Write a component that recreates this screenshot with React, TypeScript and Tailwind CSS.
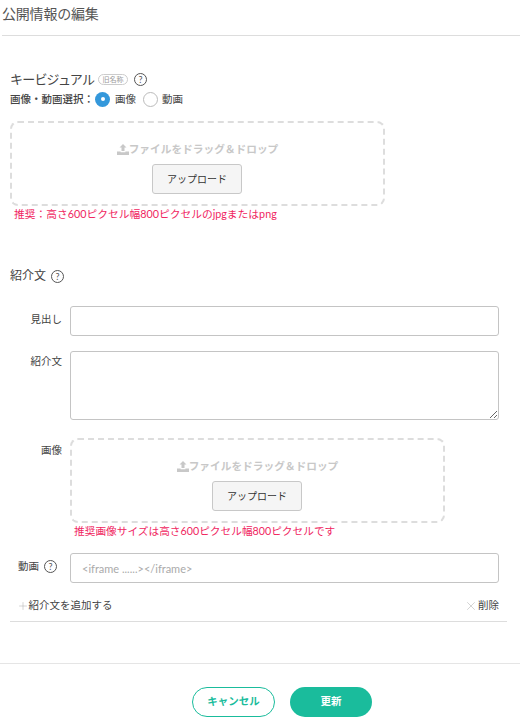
import { Plus, X } from "lucide-react";

const FONT = "font-['Lato','Noto_Sans_CJK_JP',sans-serif]";

function Help() {
  return (
    <span className="inline-flex h-[13px] w-[13px] items-center justify-center rounded-full border border-[#555] text-[9px] leading-none text-[#555]">
      ?
    </span>
  );
}

function UploadIcon() {
  return (
    <svg width="12" height="11" viewBox="0 0 12 11" fill="#c8c8c8">
      <path d="M6 0 9.5 3.6H7.5V7H4.5V3.6H2.5Z" />
      <path d="M0 7.5H3.6V8.2H8.4V7.5H12V11H0Z" />
    </svg>
  );
}

function DropZone() {
  return (
    <div className="flex h-[85px] w-[375px] flex-col items-center rounded-lg border-2 border-dashed border-[#dddddd] pt-[18px]">
      <div className="flex h-4 items-center text-[10.7px] font-bold leading-4 text-[#c8c8c8]">
        <UploadIcon />
        <span>{"ファイルをドラッグ\uFF06ドロップ"}</span>
      </div>
      <button className="mr-[1px] mt-[7px] h-[30px] w-[90px] rounded-[3px] border border-[#c8c8c8] bg-[#f5f5f5] text-[10px] text-[#333]">
        アップロード
      </button>
    </div>
  );
}

export default function App() {
  return (
    <main className={`min-h-[724px] w-[520px] bg-white text-[#444] ${FONT}`}>
      <h1 className="ml-[2px] h-9 border-b border-[#dddddd] pt-[4px] text-[14px] leading-[20px] tracking-[-0.2px] text-[#555]">
        公開情報の編集
      </h1>

      <section className="px-[10px] pt-[33px]">
        <div className="flex h-5 items-center text-[13px] leading-5">
          <span className="tracking-[-0.8px]">キービジュアル</span>
          <span className="ml-[4px] rounded-full border border-[#ccc] px-[3.5px] text-[7px] leading-[9px] text-[#999]">
            旧名称
          </span>
          <span className="ml-[6px] flex"><Help /></span>
        </div>
        <div className="flex h-5 items-center text-[10.5px] font-medium leading-5">
          <span>{"画像・動画選択\uFF1A"}</span>
          <span className="ml-[1px] flex h-[15px] w-[15px] items-center justify-center rounded-full bg-[#3498db]">
            <span className="h-1 w-1 rounded-full bg-white" />
          </span>
          <span className="ml-[5px] font-normal">画像</span>
          <span className="ml-[7px] h-[15px] w-[15px] rounded-full border border-[#bbb]" />
          <span className="ml-[4px] font-normal">動画</span>
        </div>
        <div className="mt-[12px]">
          <DropZone />
        </div>
        <p className="ml-1 text-[10.75px] leading-4 text-[#f0265f]">
          {"推奨\uFF1A高さ600ピクセル幅800ピクセルのjpgまたはpng"}
        </p>
      </section>

      <section className="px-[10px] pt-[44px]">
        <div className="flex h-5 items-center gap-[5px] text-[12px] leading-5">
          <span>紹介文</span>
          <Help />
        </div>

        <div className="mt-[20px] flex items-center">
          <label className="w-[52px] pb-[2px] text-right text-[10.5px]">見出し</label>
          <input className="ml-2 h-[30px] w-[429px] rounded-[3px] border border-[#c4c4c4] bg-white" />
        </div>

        <div className="mt-[15px] flex items-start">
          <label className="w-[52px] pt-[2px] text-right text-[10.5px] leading-4">紹介文</label>
          <textarea className="ml-2 block h-[69px] w-[429px] rounded-[3px] border border-[#c4c4c4] bg-white" />
        </div>

        <div className="mt-[18px] flex items-start">
          <label className="w-[52px] pt-[4px] text-right text-[10.5px] leading-4">画像</label>
          <div className="ml-2">
            <DropZone />
            <p className="ml-1 text-[10.7px] leading-4 text-[#f0265f]">
              推奨画像サイズは高さ600ピクセル幅800ピクセルです
            </p>
          </div>
        </div>

        <div className="mt-[14px] flex items-center">
          <label className="flex w-[52px] items-center justify-end gap-[5px] pb-[3px] pr-[5px] text-[10.5px]">
            <span>動画</span>
            <Help />
          </label>
          <input
            placeholder="<iframe ......></iframe>"
            className="ml-2 h-[30px] w-[429px] rounded-[3px] border border-[#c4c4c4] bg-white px-[11px] text-[11px] placeholder:text-[#aaa]"
          />
        </div>

        <div className="mt-[11px] flex h-[24px] w-[497px] items-center pl-[6.5px] pr-2 text-[10.5px]">
          <Plus size={12} strokeWidth={1.2} className="text-[#bbb]" />
          <span>紹介文を追加する</span>
          <span className="ml-auto flex items-center">
            <X size={14} strokeWidth={1.1} className="text-[#bbb]" />
            <span>削除</span>
          </span>
        </div>
        <div className="mt-[3px] h-px w-[497px] bg-[#dddddd]" />
      </section>

      <footer className="mt-[41px] flex h-[61px] justify-center gap-[15px] border-t border-[#e5e5e5] pl-[44px] pt-[23px]">
        <button className="h-[30px] w-[83px] rounded-full border border-[#1abc9c] bg-white text-[10.5px] font-bold text-[#1abc9c]">
          キャンセル
        </button>
        <button className="h-[30px] w-[82px] rounded-full bg-[#1abc9c] text-[10.5px] font-bold text-white">
          更新
        </button>
      </footer>
    </main>
  );
}
